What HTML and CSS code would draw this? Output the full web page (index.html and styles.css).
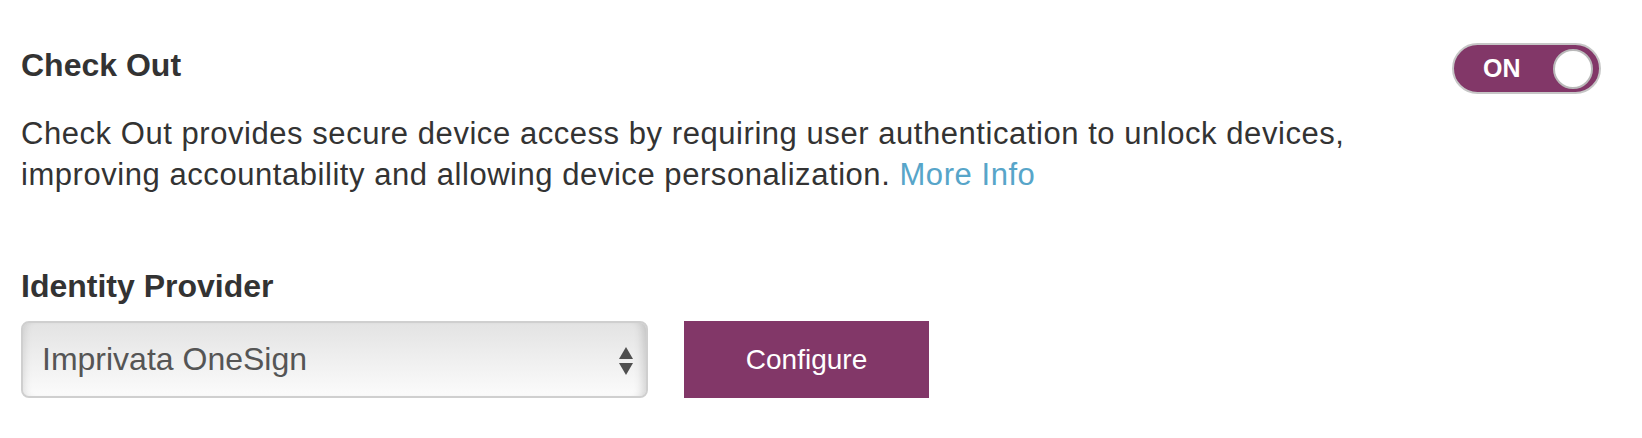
FILE: index.html
```html
<!DOCTYPE html>
<html lang="en">
<head>
<meta charset="utf-8">
<title>Check Out</title>
<link rel="stylesheet" href="styles.css">
</head>
<body>
<div class="page">
  <section class="feature">
    <div class="feature-head">
      <h2 class="feature-title">Check Out</h2>
      <div class="toggle" role="switch" aria-checked="true">
        <span class="toggle-label">ON</span>
        <span class="toggle-knob"></span>
      </div>
    </div>
    <p class="feature-desc">Check Out provides secure device access by requiring user authentication to unlock devices, improving accountability and allowing device personalization. <a class="link" href="#">More Info</a></p>
  </section>
  <section class="provider">
    <h3 class="provider-label">Identity Provider</h3>
    <div class="provider-row">
      <div class="select">
        <span class="select-value">Imprivata OneSign</span>
        <svg class="select-arrows" width="14" height="28" viewBox="0 0 14 28" aria-hidden="true">
          <polygon points="7,0 14,12 0,12" fill="#4f4f4f"/>
          <polygon points="0,16 14,16 7,28" fill="#4f4f4f"/>
        </svg>
      </div>
      <button class="btn" type="button">Configure</button>
    </div>
  </section>
</div>
</body>
</html>
```

FILE: styles.css
```css
html, body {
  margin: 0;
  padding: 0;
  background: #ffffff;
}

body {
  font-family: "Liberation Sans", Arial, Helvetica, sans-serif;
  color: #333333;
}

.page {
  padding: 43px 41px 0 21px;
}

.feature-head {
  display: flex;
  justify-content: space-between;
  align-items: flex-start;
}

.feature-title {
  margin: 4px 0 0 0;
  font-size: 32px;
  line-height: 37px;
  font-weight: bold;
  color: #333333;
}

.toggle {
  box-sizing: border-box;
  width: 149px;
  height: 51px;
  border: 2px solid #c6c6c6;
  border-radius: 26px;
  background: #823768;
  display: flex;
  align-items: center;
  padding: 0 6px 0 29px;
}

.toggle-label {
  color: #ffffff;
  font-weight: bold;
  font-size: 25px;
  line-height: 1;
}

.toggle-knob {
  box-sizing: border-box;
  margin-left: auto;
  width: 40px;
  height: 40px;
  border-radius: 50%;
  background: #ffffff;
  border: 2px solid #b9b9b9;
}

.feature-desc {
  margin: 19px 0 0 0;
  max-width: 1400px;
  font-size: 31px;
  line-height: 41px;
  letter-spacing: 0.55px;
  color: #333333;
}

.link {
  color: #57a5c9;
  text-decoration: none;
}

.provider {
  margin-top: 73px;
}

.provider-label {
  margin: 0;
  font-size: 32px;
  line-height: 37px;
  font-weight: bold;
  color: #333333;
}

.provider-row {
  margin-top: 16px;
  display: flex;
  align-items: center;
  gap: 36px;
}

.select {
  box-sizing: border-box;
  width: 627px;
  height: 77px;
  border: 2px solid #cfcfcf;
  border-radius: 8px;
  background: linear-gradient(#e3e3e3, #fbfbfb);
  box-shadow: inset 8px 0 8px -7px rgba(0, 0, 0, 0.12), inset -10px 0 10px -7px rgba(0, 0, 0, 0.16);
  display: flex;
  align-items: center;
  justify-content: space-between;
  padding: 0 13px 0 19px;
}

.select-value {
  font-size: 32px;
  color: #555555;
}

.select-arrows {
  display: block;
  margin-top: 2px;
}

.btn {
  box-sizing: border-box;
  width: 245px;
  height: 77px;
  border: 0;
  background: #823768;
  color: #ffffff;
  font-family: "Liberation Sans", Arial, Helvetica, sans-serif;
  font-size: 28px;
  padding: 0;
  cursor: pointer;
}
```
